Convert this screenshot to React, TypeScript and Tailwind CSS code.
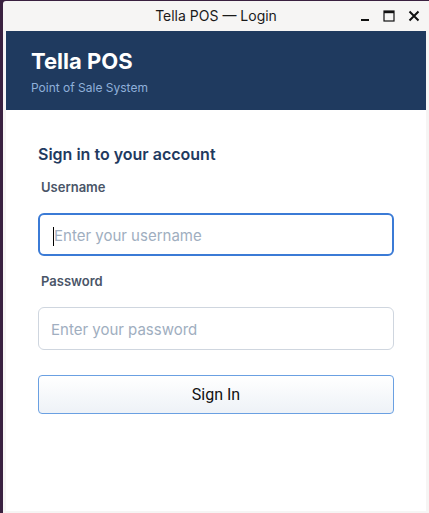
import React from "react";

export default function App() {
  return (
    <div className="w-[429px] h-[513px] bg-[#3a2140] pl-[3px] pt-[1px] overflow-hidden">
      <div className="w-[426px] h-[512px] bg-[#f6f5f4] flex flex-col px-[3px] pb-[2px] rounded-tl-[3px]">
        {/* Title bar */}
        <div className="h-[30px] relative flex items-center justify-center shrink-0">
          <span className="text-[14px] text-[#1a1a1a] font-['Inter',sans-serif] leading-none">
            Tella POS — Login
          </span>
          <div className="absolute right-[6px] top-0 h-full flex items-center gap-[13px]">
            <svg width="10" height="12" viewBox="0 0 10 12">
              <rect x="1" y="9" width="8" height="2" fill="#111" />
            </svg>
            <svg width="12" height="12" viewBox="0 0 12 12">
              <rect x="1" y="1" width="10" height="10" fill="none" stroke="#111" strokeWidth="1.2" />
              <rect x="1" y="1" width="10" height="2.2" fill="#111" />
            </svg>
            <svg width="12" height="12" viewBox="0 0 12 12">
              <path d="M1.5 1.5 L10.5 10.5 M10.5 1.5 L1.5 10.5" stroke="#111" strokeWidth="2" />
            </svg>
          </div>
        </div>
        {/* Content */}
        <div className="flex-1 bg-white flex flex-col font-['Inter',sans-serif]">
          <div className="h-[79px] bg-[#1f3a5f] pl-[25px] pt-[16px] flex flex-col">
            <div className="text-[22px] leading-[28px] font-bold text-white">Tella POS</div>
            <div className="text-[12px] leading-[16px] text-[#8fb0da] mt-[5px]">Point of Sale System</div>
          </div>
          <div className="px-8 pt-[33px] flex flex-col">
            <div className="text-[16px] leading-[22px] font-semibold text-[#1f3a5f]">
              Sign in to your account
            </div>
            <div className="ml-[3px] mt-[14px] text-[13px] leading-[16px] font-semibold text-[#4a5568]">
              Username
            </div>
            <div className="mt-[18px] h-[43px] border-2 border-[#3b7bd6] rounded-[6px] flex items-center pl-[13px] pt-[3px]">
              <div className="w-[1px] h-[19px] bg-black" />
              <span className="text-[15px] text-[#a0aec0]">Enter your username</span>
            </div>
            <div className="ml-[3px] mt-[17px] text-[13px] leading-[16px] font-semibold text-[#4a5568]">
              Password
            </div>
            <div className="mt-[18px] h-[43px] border border-[#cfd6df] rounded-[6px] flex items-center pl-[12px] pt-[3px]">
              <span className="text-[15px] text-[#a0aec0]">Enter your password</span>
            </div>
            <div className="mt-[25px] h-[39px] border border-[#6aa0e2] rounded-[4px] bg-gradient-to-b from-white to-[#eef2f7] flex items-center justify-center">
              <span className="text-[16px] text-[#111] font-['Roboto',sans-serif]">Sign In</span>
            </div>
          </div>
        </div>
      </div>
    </div>
  );
}
